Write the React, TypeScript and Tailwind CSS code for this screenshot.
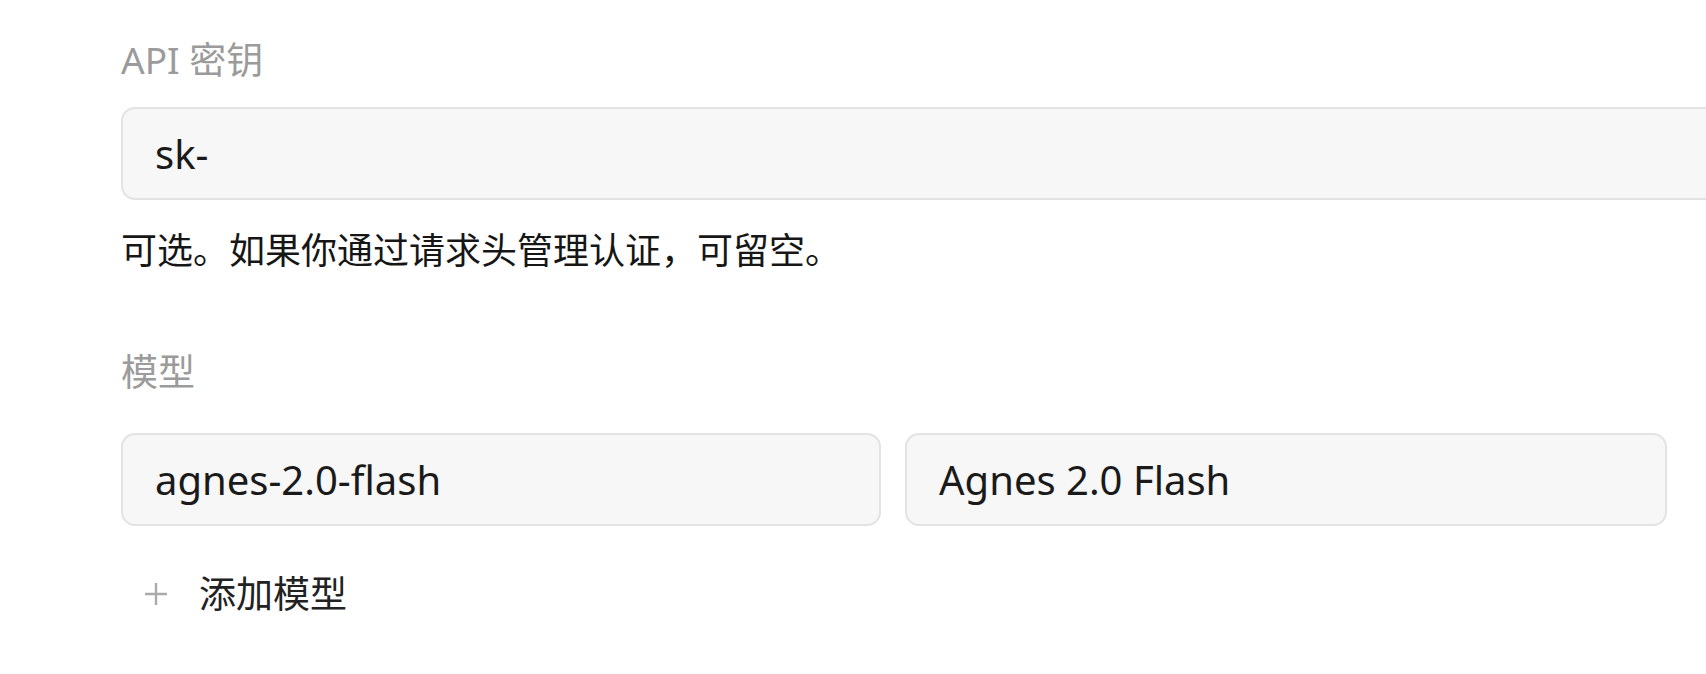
import React from "react";

const cjk = { fontFamily: '"Noto Sans", "Noto Sans CJK SC", sans-serif' };

function Field({ value, className }: { value: string; className: string }) {
  return (
    <div
      className={`h-[93px] rounded-[14px] border-2 border-[#e3e3e3] bg-[#f7f7f7] pl-[32px] flex items-center text-[40px] text-[#1a1a1a] ${className}`}
      style={cjk}
    >
      {value}
    </div>
  );
}

export default function App() {
  return (
    <div className="w-[1706px] h-[674px] overflow-hidden bg-white" style={cjk}>
      <div className="pl-[121px] pt-[34px] w-[1800px]">
        <div className="leading-[52px] text-[37px] text-[#9b9b9b]">API 密钥</div>
        <Field value="sk-" className="mt-[21px] w-[1680px]" />
        <div className="mt-[25px] leading-[52px] text-[36px] text-[#161616]">
          可选。如果你通过请求头管理认证，可留空。
        </div>
        <div className="mt-[69px] leading-[52px] text-[37px] text-[#9b9b9b]">模型</div>
        <div className="mt-[35px] flex items-center">
          <Field value="agnes-2.0-flash" className="w-[760px]" />
          <Field value="Agnes 2.0 Flash" className="ml-[24px] w-[762px]" />
          <div className="ml-[37px] text-[#a8a8a8] flex items-center">
            <svg width="30" height="30" viewBox="0 0 24 24" fill="none" stroke="currentColor" strokeWidth="1.6" strokeLinecap="round">
              <path d="M6 6l12 12M18 6L6 18" />
            </svg>
          </div>
        </div>
        <div className="mt-[42px] flex items-center h-[52px]">
          <svg className="ml-[23px]" width="24" height="24" viewBox="0 0 24 24" fill="none" stroke="#aaaaaa" strokeWidth="2.4">
            <path d="M12 1v22M1 12h22" />
          </svg>
          <span className="ml-[31px] leading-[52px] text-[37px] text-[#222222]">添加模型</span>
        </div>
      </div>
    </div>
  );
}
